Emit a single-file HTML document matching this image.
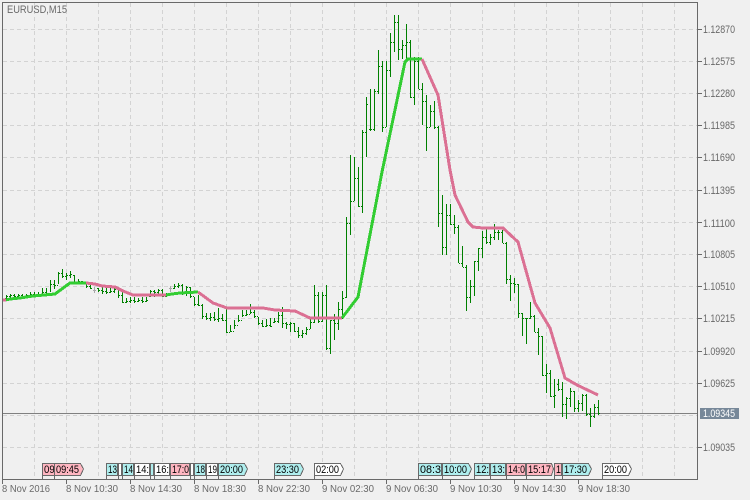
<!DOCTYPE html>
<html>
<head>
<meta charset="utf-8">
<style>
html,body{margin:0;padding:0;background:#f0f0f0;}
svg{display:block;}
text{font-family:"Liberation Sans",sans-serif;}
</style>
</head>
<body>
<svg width="750" height="500" viewBox="0 0 750 500" xmlns="http://www.w3.org/2000/svg">
<rect width="750" height="500" fill="#f0f0f0"/>
<!-- grid -->
<path shape-rendering="crispEdges" stroke="#d3d3d3" stroke-width="1" stroke-dasharray="4 3" fill="none" d="M34.5 3V479M66.5 3V479M98.5 3V479M130.5 3V479M162.5 3V479M194.5 3V479M226.5 3V479M258.5 3V479M290.5 3V479M322.5 3V479M354.5 3V479M386.5 3V479M418.5 3V479M450.5 3V479M482.5 3V479M514.5 3V479M546.5 3V479M578.5 3V479M610.5 3V479M642.5 3V479M674.5 3V479M3 29.5H697M3 61.5H697M3 93.5H697M3 125.5H697M3 157.5H697M3 190.5H697M3 222.5H697M3 254.5H697M3 286.5H697M3 318.5H697M3 351.5H697M3 383.5H697M3 415.5H697M3 447.5H697"/>
<!-- current price line -->
<path shape-rendering="crispEdges" stroke="#808080" d="M3 413.5H697"/>
<!-- gray doji bars -->
<path shape-rendering="crispEdges" stroke="#a9a9a9" fill="none" d="M94.5 287V293M93 290.5h3M170.5 286V292M169 288.5h3"/>
<!-- bars -->
<path shape-rendering="crispEdges" stroke="#008000" fill="none" d="M6.5 295V301M5 298.5h1M7 296.5h1M10.5 294V300M9 296.5h1M11 295.5h1M14.5 294V299M13 295.5h1M15 296.5h1M18.5 294V299M17 296.5h1M19 295.5h1M22.5 294V298M21 295.5h1M23 296.5h1M26.5 294V298M25 296.5h1M27 295.5h1M30.5 292V298M29 295.5h1M31 294.5h1M34.5 292V297M33 294.5h1M35 295.5h1M38.5 292V297M37 295.5h1M39 294.5h1M42.5 288V296M41 294.5h1M43 292.5h1M46.5 288V295M45 292.5h1M47 293.5h1M50.5 280V292M49 293.5h1M51 284.5h1M54.5 280V289M53 284.5h1M55 285.5h1M58.5 272V284M57 285.5h1M59 273.5h1M62.5 269V278M61 273.5h1M63 276.5h1M66.5 273V280M65 276.5h1M67 275.5h1M70.5 271V278M69 275.5h1M71 274.5h1M74.5 275V283M73 275.5h1M75 282.5h1M78.5 279V284M77 282.5h1M79 281.5h1M82.5 281V284M81 281.5h1M83 283.5h1M86.5 282V288M85 283.5h1M87 286.5h1M90.5 285V289M89 286.5h1M91 288.5h1M98.5 288V292M97 288.5h1M99 290.5h1M102.5 287V294M101 290.5h1M103 291.5h1M106.5 288V294M105 291.5h1M107 292.5h1M110.5 288V293M109 292.5h1M111 291.5h1M114.5 287V293M113 291.5h1M115 289.5h1M118.5 289V298M117 289.5h1M119 295.5h1M122.5 292V303M121 295.5h1M123 302.5h1M126.5 298V303M125 302.5h1M127 301.5h1M130.5 297V303M129 301.5h1M131 300.5h1M134.5 297V303M133 300.5h1M135 301.5h1M138.5 298V302M137 301.5h1M139 300.5h1M142.5 297V303M141 300.5h1M143 301.5h1M146.5 297V302M145 301.5h1M147 300.5h1M150.5 290V297M149 296.5h1M151 291.5h1M154.5 290V297M153 291.5h1M155 292.5h1M158.5 289V296M157 292.5h1M159 290.5h1M162.5 289V297M161 290.5h1M163 296.5h1M166.5 293V297M165 296.5h1M167 294.5h1M174.5 284V289M173 288.5h1M175 286.5h1M178.5 283V288M177 286.5h1M179 285.5h1M182.5 284V295M181 285.5h1M183 292.5h1M186.5 286V296M185 292.5h1M187 287.5h1M190.5 287V298M189 287.5h1M191 296.5h1M194.5 297V306M193 296.5h1M195 304.5h1M198.5 295V306M197 304.5h1M199 305.5h1M202.5 304V319M201 305.5h1M203 316.5h1M206.5 313V320M205 316.5h1M207 318.5h1M210.5 313V321M209 318.5h1M211 317.5h1M214.5 312V321M213 317.5h1M215 319.5h1M218.5 308V322M217 319.5h1M219 318.5h1M222.5 314V321M221 318.5h1M223 320.5h1M226.5 308V333M225 320.5h1M227 332.5h1M230.5 325V332M229 332.5h1M231 331.5h1M234.5 320V329M233 331.5h1M235 325.5h1M238.5 315V322M237 325.5h1M239 320.5h1M242.5 310V317M241 320.5h1M243 315.5h1M246.5 310V316M245 315.5h1M247 314.5h1M250.5 304V314M249 314.5h1M251 312.5h1M254.5 310V318M253 312.5h1M255 316.5h1M258.5 317V325M257 316.5h1M259 323.5h1M262.5 320V327M261 323.5h1M263 326.5h1M266.5 319V327M265 326.5h1M267 325.5h1M270.5 318V327M269 325.5h1M271 326.5h1M274.5 318V323M273 322.5h1M275 321.5h1M278.5 312V323M277 321.5h1M279 315.5h1M282.5 307V328M281 315.5h1M283 323.5h1M286.5 322V329M285 323.5h1M287 324.5h1M290.5 322V332M289 324.5h1M291 323.5h1M294.5 323V332M293 323.5h1M295 331.5h1M298.5 327V338M297 331.5h1M299 335.5h1M302.5 330V338M301 335.5h1M303 333.5h1M306.5 327V335M305 333.5h1M307 329.5h1M310.5 318V329M309 329.5h1M311 322.5h1M314.5 285V323M313 322.5h1M315 295.5h1M318.5 292V323M317 295.5h1M319 321.5h1M322.5 292V322M321 321.5h1M323 295.5h1M326.5 285V350M325 295.5h1M327 348.5h1M330.5 320V354M329 348.5h1M331 320.5h1M334.5 314V340M333 320.5h1M335 323.5h1M338.5 302V330M337 323.5h1M339 309.5h1M342.5 291V319M341 309.5h1M343 298.5h1M346.5 217V298M345 297.5h1M347 223.5h1M350.5 155V235M349 223.5h1M351 201.5h1M354.5 157V201M353 201.5h1M355 178.5h1M358.5 167V207M357 178.5h1M359 206.5h1M362.5 130V213M361 206.5h1M363 132.5h1M366.5 97V157M365 132.5h1M367 104.5h1M370.5 89V131M369 129.5h1M371 129.5h1M374.5 89V131M373 129.5h1M375 91.5h1M378.5 50V94M377 91.5h1M379 66.5h1M382.5 61V132M381 66.5h1M383 127.5h1M386.5 61V127M385 127.5h1M387 70.5h1M390.5 33V77M389 70.5h1M391 42.5h1M394.5 15V52M393 42.5h1M395 22.5h1M398.5 15V60M397 22.5h1M399 49.5h1M402.5 40V59M401 49.5h1M403 45.5h1M406.5 24V60M405 45.5h1M407 42.5h1M410.5 40V98M409 42.5h1M411 97.5h1M414.5 57V105M413 97.5h1M415 61.5h1M418.5 57V89M417 61.5h1M419 89.5h1M422.5 83V125M421 89.5h1M423 101.5h1M426.5 95V151M425 101.5h1M427 127.5h1M430.5 105V127M429 127.5h1M431 111.5h1M434.5 101V129M433 111.5h1M435 127.5h1M438.5 126V227M437 127.5h1M439 213.5h1M442.5 195V255M441 213.5h1M443 247.5h1M446.5 204V255M445 247.5h1M447 215.5h1M450.5 204V225M449 215.5h1M451 224.5h1M454.5 215V234M453 224.5h1M455 227.5h1M458.5 225V263M457 227.5h1M459 263.5h1M462.5 246V267M461 263.5h1M463 267.5h1M466.5 265V311M465 267.5h1M467 297.5h1M470.5 280V303M469 297.5h1M471 286.5h1M474.5 261V296M473 286.5h1M475 261.5h1M478.5 248V271M477 261.5h1M479 248.5h1M482.5 231V258M481 248.5h1M483 237.5h1M486.5 229V244M485 237.5h1M487 242.5h1M490.5 234V245M489 242.5h1M491 237.5h1M494.5 224V240M493 237.5h1M495 232.5h1M498.5 230V240M497 232.5h1M499 232.5h1M502.5 230V243M501 232.5h1M503 243.5h1M506.5 242V284M505 243.5h1M507 279.5h1M510.5 275V301M509 279.5h1M511 283.5h1M514.5 278V293M513 283.5h1M515 284.5h1M518.5 284V318M517 284.5h1M519 313.5h1M522.5 313V336M521 313.5h1M523 318.5h1M526.5 318V344M525 318.5h1M527 318.5h1M530.5 302V319M529 318.5h1M531 316.5h1M534.5 315V332M533 316.5h1M535 332.5h1M538.5 328V355M537 332.5h1M539 336.5h1M542.5 336V376M541 336.5h1M543 375.5h1M546.5 364V393M545 375.5h1M547 373.5h1M550.5 370V397M549 373.5h1M551 396.5h1M554.5 379V408M553 396.5h1M555 395.5h1M558.5 379V391M557 384.5h1M559 389.5h1M562.5 382V417M561 389.5h1M563 404.5h1M566.5 397V419M565 404.5h1M567 398.5h1M570.5 388V407M569 398.5h1M571 391.5h1M574.5 391V412M573 391.5h1M575 408.5h1M578.5 400V412M577 408.5h1M579 403.5h1M582.5 394V411M581 403.5h1M583 395.5h1M586.5 394V416M585 395.5h1M587 414.5h1M590.5 408V427M589 414.5h1M591 416.5h1M594.5 404V418M593 416.5h1M595 407.5h1M598.5 400V415M597 407.5h1M599 413.5h1"/>
<!-- MA line -->
<g fill="none" stroke-width="3" stroke-linejoin="round" shape-rendering="crispEdges">
<path stroke="#32cd32" d="M6 300L10 299L20 298L33 296L55 294L70 283L86 283"/>
<path stroke="#db7093" d="M86 283L95 284L102 286L115 287L123 291L133 295L166 295"/>
<path stroke="#32cd32" d="M166 295L172 294L180 293L198 292"/>
<path stroke="#db7093" d="M198 292L213 303L227 308L263 308L275 310L295 311L310 318L342 318"/>
<path stroke="#32cd32" d="M342 318L358 297L382 172L405 62L408 59L422 59"/>
<path stroke="#db7093" d="M422 59L438 95L450 170L455 195L468 222L473 227L483 228L503 228L518 242L535 303L550 328L565 378L577 385L598 395"/>
<path stroke="#db7093" d="M2 300H6"/>
</g>
<!-- frame -->
<path shape-rendering="crispEdges" stroke="#696969" fill="none" d="M2.5 2V484M2 2.5H698M697.5 2V480M2 479.5H698"/>
<!-- axis ticks -->
<path shape-rendering="crispEdges" stroke="#696969" fill="none" d="M698 29.5h4M698 61.5h4M698 93.5h4M698 125.5h4M698 157.5h4M698 190.5h4M698 222.5h4M698 254.5h4M698 286.5h4M698 318.5h4M698 351.5h4M698 383.5h4M698 447.5h4M66.5 480v4M130.5 480v4M194.5 480v4M258.5 480v4M322.5 480v4M386.5 480v4M450.5 480v4M514.5 480v4M578.5 480v4"/>
<!-- title -->
<text x="7" y="13" font-size="11" fill="#696969" textLength="60" lengthAdjust="spacingAndGlyphs">EURUSD,M15</text>
<!-- price labels -->
<g font-size="11" fill="#696969">
<text x="703" y="33" textLength="32" lengthAdjust="spacingAndGlyphs">1.12870</text>
<text x="703" y="65" textLength="32" lengthAdjust="spacingAndGlyphs">1.12575</text>
<text x="703" y="97" textLength="32" lengthAdjust="spacingAndGlyphs">1.12280</text>
<text x="703" y="129" textLength="32" lengthAdjust="spacingAndGlyphs">1.11985</text>
<text x="703" y="161" textLength="32" lengthAdjust="spacingAndGlyphs">1.11690</text>
<text x="703" y="194" textLength="32" lengthAdjust="spacingAndGlyphs">1.11395</text>
<text x="703" y="227" textLength="32" lengthAdjust="spacingAndGlyphs">1.11100</text>
<text x="703" y="258" textLength="32" lengthAdjust="spacingAndGlyphs">1.10805</text>
<text x="703" y="290" textLength="32" lengthAdjust="spacingAndGlyphs">1.10510</text>
<text x="703" y="322" textLength="32" lengthAdjust="spacingAndGlyphs">1.10215</text>
<text x="703" y="355" textLength="32" lengthAdjust="spacingAndGlyphs">1.09920</text>
<text x="703" y="387" textLength="32" lengthAdjust="spacingAndGlyphs">1.09625</text>
<text x="703" y="451" textLength="32" lengthAdjust="spacingAndGlyphs">1.09035</text>
</g>
<rect x="700" y="408" width="39" height="11" fill="#778899" shape-rendering="crispEdges"/>
<text x="703" y="417" font-size="11" fill="#ffffff" textLength="32" lengthAdjust="spacingAndGlyphs">1.09345</text>
<!-- time labels -->
<g font-size="10.5" fill="#696969">
<text x="2" y="492" textLength="48" lengthAdjust="spacingAndGlyphs">8 Nov 2016</text>
<text x="66" y="492" textLength="52" lengthAdjust="spacingAndGlyphs">8 Nov 10:30</text>
<text x="130" y="492" textLength="52" lengthAdjust="spacingAndGlyphs">8 Nov 14:30</text>
<text x="194" y="492" textLength="52" lengthAdjust="spacingAndGlyphs">8 Nov 18:30</text>
<text x="258" y="492" textLength="52" lengthAdjust="spacingAndGlyphs">8 Nov 22:30</text>
<text x="322" y="492" textLength="52" lengthAdjust="spacingAndGlyphs">9 Nov 02:30</text>
<text x="386" y="492" textLength="52" lengthAdjust="spacingAndGlyphs">9 Nov 06:30</text>
<text x="450" y="492" textLength="52" lengthAdjust="spacingAndGlyphs">9 Nov 10:30</text>
<text x="514" y="492" textLength="52" lengthAdjust="spacingAndGlyphs">9 Nov 14:30</text>
<text x="578" y="492" textLength="52" lengthAdjust="spacingAndGlyphs">9 Nov 18:30</text>
</g>
<!-- time tags -->
<g font-size="11" fill="#000">
<g stroke="#696969" shape-rendering="crispEdges"><path fill="#ffb6c1" d="M42.5 479V463.5H69.5L71.5 469L69.5 475.5H42.5"/></g><text x="44" y="473" textLength="24" lengthAdjust="spacingAndGlyphs">09:10</text>
<g stroke="#696969" shape-rendering="crispEdges"><path fill="#ffb6c1" d="M54.5 479V463.5H80.5L83.5 469L80.5 475.5H54.5"/></g><text x="56" y="473" textLength="23" lengthAdjust="spacingAndGlyphs">09:45</text>
<g stroke="#696969" shape-rendering="crispEdges"><path fill="#afeeee" d="M106.5 479V463.5H117.5V475.5H106.5"/></g><text x="108" y="473" textLength="9" lengthAdjust="spacingAndGlyphs">13</text>
<g stroke="#696969" shape-rendering="crispEdges"><path fill="#ffffff" d="M118.5 479V463.5H121.5V475.5H118.5"/></g>
<g stroke="#696969" shape-rendering="crispEdges"><path fill="#afeeee" d="M122.5 479V463.5H133.5V475.5H122.5"/></g><text x="124" y="473" textLength="9" lengthAdjust="spacingAndGlyphs">14</text>
<g stroke="#696969" shape-rendering="crispEdges"><path fill="#ffffff" d="M134.5 479V463.5H149.5V475.5H134.5"/></g><text x="136" y="473" textLength="13" lengthAdjust="spacingAndGlyphs">14:</text>
<g stroke="#696969" shape-rendering="crispEdges"><path fill="#afeeee" d="M150.5 479V463.5H153.5V475.5H150.5"/></g>
<g stroke="#696969" shape-rendering="crispEdges"><path fill="#ffffff" d="M154.5 479V463.5H169.5V475.5H154.5"/></g><text x="156" y="473" textLength="13" lengthAdjust="spacingAndGlyphs">16:</text>
<g stroke="#696969" shape-rendering="crispEdges"><path fill="#ffb6c1" d="M170.5 479V463.5H189.5V475.5H170.5"/></g><text x="172" y="473" textLength="17" lengthAdjust="spacingAndGlyphs">17:0</text>
<g stroke="#696969" shape-rendering="crispEdges"><path fill="#ffffff" d="M190.5 479V463.5H193.5V475.5H190.5"/></g>
<g stroke="#696969" shape-rendering="crispEdges"><path fill="#afeeee" d="M194.5 479V463.5H205.5V475.5H194.5"/></g><text x="196" y="473" textLength="9" lengthAdjust="spacingAndGlyphs">18</text>
<g stroke="#696969" shape-rendering="crispEdges"><path fill="#ffffff" d="M206.5 479V463.5H217.5V475.5H206.5"/></g><text x="208" y="473" textLength="9" lengthAdjust="spacingAndGlyphs">19</text>
<g stroke="#696969" shape-rendering="crispEdges"><path fill="#afeeee" d="M218.5 479V463.5H244.5L247.5 469L244.5 475.5H218.5"/></g><text x="220" y="473" textLength="23" lengthAdjust="spacingAndGlyphs">20:00</text>
<g stroke="#696969" shape-rendering="crispEdges"><path fill="#afeeee" d="M274.5 479V463.5H300.5L303.5 469L300.5 475.5H274.5"/></g><text x="276" y="473" textLength="23" lengthAdjust="spacingAndGlyphs">23:30</text>
<g stroke="#696969" shape-rendering="crispEdges"><path fill="#ffffff" d="M314.5 479V463.5H340.5L343.5 469L340.5 475.5H314.5"/></g><text x="316" y="473" textLength="23" lengthAdjust="spacingAndGlyphs">02:00</text>
<g stroke="#696969" shape-rendering="crispEdges"><path fill="#afeeee" d="M418.5 479V463.5H441.5V475.5H418.5"/></g><text x="420" y="473" textLength="21" lengthAdjust="spacingAndGlyphs">08:3</text>
<g stroke="#696969" shape-rendering="crispEdges"><path fill="#afeeee" d="M442.5 479V463.5H468.5L471.5 469L468.5 475.5H442.5"/></g><text x="444" y="473" textLength="23" lengthAdjust="spacingAndGlyphs">10:00</text>
<g stroke="#696969" shape-rendering="crispEdges"><path fill="#afeeee" d="M474.5 479V463.5H489.5V475.5H474.5"/></g><text x="476" y="473" textLength="13" lengthAdjust="spacingAndGlyphs">12:</text>
<g stroke="#696969" shape-rendering="crispEdges"><path fill="#afeeee" d="M490.5 479V463.5H505.5V475.5H490.5"/></g><text x="492" y="473" textLength="13" lengthAdjust="spacingAndGlyphs">13:</text>
<g stroke="#696969" shape-rendering="crispEdges"><path fill="#ffb6c1" d="M506.5 479V463.5H525.5V475.5H506.5"/></g><text x="508" y="473" textLength="17" lengthAdjust="spacingAndGlyphs">14:0</text>
<g stroke="#696969" shape-rendering="crispEdges"><path fill="#ffb6c1" d="M526.5 479V463.5H551.5L553.5 469L551.5 475.5H526.5"/></g><text x="528" y="473" textLength="23" lengthAdjust="spacingAndGlyphs">15:17</text>
<g stroke="#696969" shape-rendering="crispEdges"><path fill="#ffb6c1" d="M554.5 479V463.5H561.5V475.5H554.5"/></g><text x="556" y="473" textLength="5" lengthAdjust="spacingAndGlyphs">1</text>
<g stroke="#696969" shape-rendering="crispEdges"><path fill="#afeeee" d="M562.5 479V463.5H588.5L591.5 469L588.5 475.5H562.5"/></g><text x="564" y="473" textLength="23" lengthAdjust="spacingAndGlyphs">17:30</text>
<g stroke="#696969" shape-rendering="crispEdges"><path fill="#ffffff" d="M602.5 479V463.5H628.5L631.5 469L628.5 475.5H602.5"/></g><text x="604" y="473" textLength="23" lengthAdjust="spacingAndGlyphs">20:00</text>
</g>
</svg>
</body>
</html>
